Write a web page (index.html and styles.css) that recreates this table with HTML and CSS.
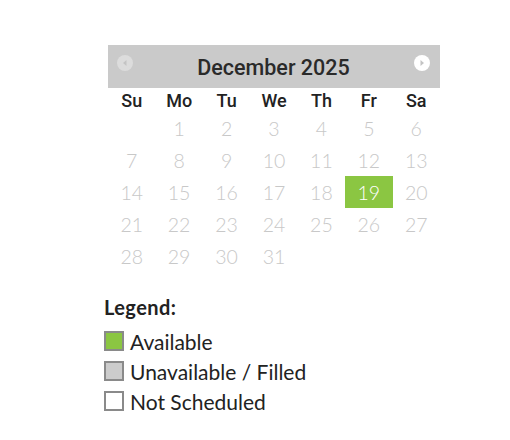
FILE: index.html
```html
<!DOCTYPE html>
<html>
<head>
<meta charset="utf-8">
<link rel="stylesheet" href="styles.css">
</head>
<body>
<div class="page">
  <div class="calendar">
    <div class="cal-header">
      <span class="nav nav-prev"><svg width="16" height="16" viewBox="0 0 16 16"><circle cx="8" cy="8" r="8" fill="#dcdcdc"/><path d="M9.5 5 L6 8 L9.5 11 Z" fill="#c4c4c4"/></svg></span>
      <span class="title">December 2025</span>
      <span class="nav nav-next"><svg width="16" height="16" viewBox="0 0 16 16"><circle cx="8" cy="8" r="8" fill="#ffffff"/><path d="M6.5 5 L10 8 L6.5 11 Z" fill="#c4c4c4"/></svg></span>
    </div>
    <div class="grid">
      <div class="dow">Su</div><div class="dow">Mo</div><div class="dow">Tu</div><div class="dow">We</div><div class="dow">Th</div><div class="dow">Fr</div><div class="dow">Sa</div>
      <div class="day"></div><div class="day">1</div><div class="day">2</div><div class="day">3</div><div class="day">4</div><div class="day">5</div><div class="day">6</div>
      <div class="day">7</div><div class="day">8</div><div class="day">9</div><div class="day">10</div><div class="day">11</div><div class="day">12</div><div class="day">13</div>
      <div class="day">14</div><div class="day">15</div><div class="day">16</div><div class="day">17</div><div class="day">18</div><div class="day available">19</div><div class="day">20</div>
      <div class="day">21</div><div class="day">22</div><div class="day">23</div><div class="day">24</div><div class="day">25</div><div class="day">26</div><div class="day">27</div>
      <div class="day">28</div><div class="day">29</div><div class="day">30</div><div class="day">31</div><div class="day"></div><div class="day"></div><div class="day"></div>
    </div>
  </div>
  <div class="legend">
    <div class="legend-title">Legend:</div>
    <div class="legend-item"><span class="swatch swatch-green"></span>Available</div>
    <div class="legend-item"><span class="swatch swatch-gray"></span>Unavailable / Filled</div>
    <div class="legend-item"><span class="swatch swatch-white"></span>Not Scheduled</div>
  </div>
</div>
</body>
</html>
```
FILE: styles.css
```css
html, body {
  margin: 0;
  padding: 0;
  background: #ffffff;
}
.page {
  padding-top: 45px;
  padding-left: 104px;
  font-family: "Lato", "Liberation Sans", sans-serif;
}
.calendar {
  width: 332px;
  margin-left: 4px;
}
.cal-header {
  height: 43px;
  background: #cacaca;
  display: flex;
  align-items: center;
  justify-content: space-between;
  padding: 0 10px 0 9px;
}
.nav {
  width: 16px;
  height: 16px;
  display: flex;
  margin-top: -8px;
}
.title {
  font-family: "Roboto", "Liberation Sans", sans-serif;
  font-weight: 500;
  font-size: 21.5px;
  color: #2a2a2a;
  margin-top: 2px;
}
.grid {
  display: grid;
  grid-template-columns: repeat(7, 1fr);
  grid-template-rows: 24px;
  grid-auto-rows: 32px;
}
.dow {
  grid-row: 1;
  display: flex;
  align-items: center;
  justify-content: center;
  font-family: "Roboto", "Liberation Sans", sans-serif;
  font-weight: 500;
  font-size: 18px;
  color: #222;
}
.day {
  display: flex;
  align-items: center;
  justify-content: center;
  font-size: 19.5px;
  font-weight: 300;
  color: #c8c8c8;
}
.day.available {
  background: #8bc642;
  color: #ffffff;
}
.legend {
  margin-top: 24px;
  color: #222;
}
.legend-title {
  font-weight: 700;
  font-size: 20px;
  letter-spacing: 0.4px;
  height: 22px;
  line-height: 22px;
  margin-bottom: 13px;
}
.legend-item {
  display: flex;
  align-items: center;
  height: 30px;
  font-size: 21px;
  margin-top: -5px;
  margin-bottom: 5px;
}
.swatch {
  width: 16px;
  height: 16px;
  border: 2px solid #8a8a8a;
  margin-right: 6px;
  flex: none;
}
.swatch-green { background: #8bc642; }
.swatch-gray { background: #cccccc; }
.swatch-white { background: #ffffff; }
```
